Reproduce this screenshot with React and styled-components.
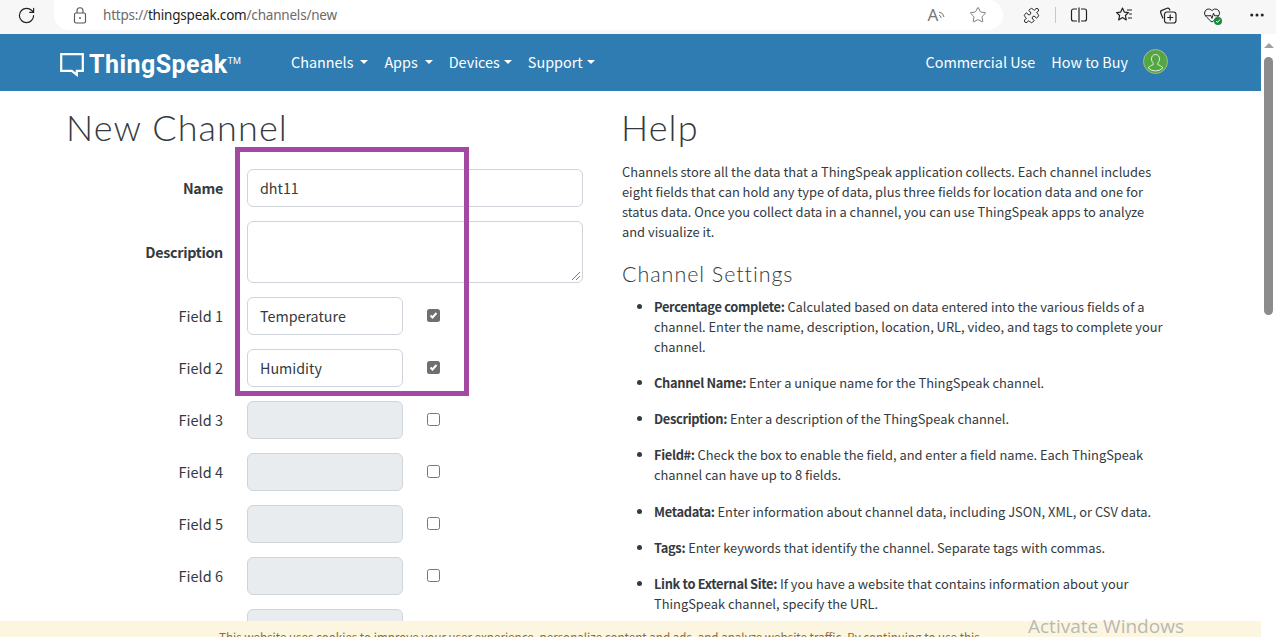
import React from "react";
import styled, { createGlobalStyle } from "styled-components";
import { RotateCw, Star, Puzzle, HeartPulse, MoreHorizontal } from "lucide-react";

const bodyFont = `"Noto Sans CJK SC", "Noto Sans", sans-serif`;
const headFont = `Lato, "Open Sans", sans-serif`;

const Global = createGlobalStyle`
  html, body { margin: 0; padding: 0; background: #fff; overflow: hidden; }
  * { box-sizing: border-box; }
`;

const Screen = styled.div`
  position: relative;
  width: 1276px;
  height: 637px;
  overflow: hidden;
  display: flex;
  flex-direction: column;
  font-family: ${bodyFont};
  color: #343a40;
`;

/* browser toolbar */
const Toolbar = styled.div`
  height: 34px;
  flex: none;
  background: #f7f7f7;
  display: flex;
  align-items: center;
  padding: 0 0 4px 16px;
`;
const IconSlot = styled.div`
  width: ${(p) => p.$w || 20}px;
  height: 20px;
  margin-right: ${(p) => p.$mr || 0}px;
  flex: none;
  display: flex;
  align-items: center;
  justify-content: center;
  position: relative;
  color: ${(p) => p.$color || "#222"};
`;
const AddressPill = styled.div`
  width: 949px;
  height: 30px;
  margin: 0 18px 0 18px;
  align-self: flex-start;
  background: #fff;
  border-radius: 0 15px 15px 15px;
  display: flex;
  align-items: center;
  padding-left: 18px;
`;
const Url = styled.div`
  margin-left: 15px;
  font-size: 13.5px;
  font-family: "Noto Sans", sans-serif;
  letter-spacing: -0.2px;
  color: #6b6b6b;
  flex: 1;
  b { font-weight: 400; color: #1d1d1d; }
`;
const ReadAloud = styled.span`
  font-size: 17px;
  color: #777;
  font-family: "Noto Sans", sans-serif;
  line-height: 20px;
`;
const Divider = styled.div`
  width: 1px;
  height: 16px;
  background: #c8c8c8;
  margin-right: 13px;
  flex: none;
`;
const Badge = styled.span`
  position: absolute;
  right: 0;
  bottom: 0;
  width: 8px;
  height: 8px;
  border-radius: 50%;
  background: #1a8a3a;
  display: flex;
  align-items: center;
  justify-content: center;
`;

/* page + scrollbar */
const Viewport = styled.div`
  flex: 1;
  min-height: 0;
  display: flex;
  background: #f7f7f7;
`;
const Page = styled.div`
  flex: 1;
  min-width: 0;
  display: flex;
  flex-direction: column;
  background: #fff;
`;
const Scrollbar = styled.div`
  width: 15px;
  flex: none;
  background: #fff;
  border-radius: 6px 0 0 0;
  display: flex;
  flex-direction: column;
  align-items: center;
  padding-top: 9px;
`;
const ScrollArrow = styled.div`
  width: 0;
  height: 0;
  border-left: 5px solid transparent;
  border-right: 5px solid transparent;
  border-bottom: 5px solid #a0a0a0;
`;
const ScrollThumb = styled.div`
  width: 9px;
  height: 258px;
  margin-top: 9px;
  background: #8c8c8c;
  border-radius: 4.5px;
`;

/* site nav */
const Nav = styled.nav`
  height: 57px;
  flex: none;
  background: #2e7cb1;
  display: flex;
  align-items: center;
  padding: 0 0 2px 60px;
  color: #fff;
`;
const Logo = styled.div`
  display: flex;
  align-items: center;
  width: 231px;
  margin-top: 6px;
  flex: none;
`;
const LogoText = styled.span`
  margin-left: 5px;
  font-family: Roboto, "Liberation Sans", sans-serif;
  font-weight: 700;
  font-size: 25px;
  letter-spacing: 0.45px;
  line-height: 30px;
  sup { font-size: 9px; font-weight: 400; vertical-align: 9px; line-height: 0; letter-spacing: 0; }
`;
const NavItem = styled.a`
  font-size: 14.4px;
  line-height: 20px;
  color: #fff;
  margin-right: ${(p) => p.$mr || 16}px;
  display: inline-flex;
  align-items: center;
  &::after {
    content: ${(p) => (p.$caret ? '""' : "none")};
    margin-left: ${(p) => p.$caret}px;
    border-top: 4px solid #fff;
    border-left: 4px solid transparent;
    border-right: 4px solid transparent;
  }
`;
const NavSpacer = styled.div`
  flex: 1;
`;
const Avatar = styled.div`
  width: 25px;
  height: 25px;
  margin-right: 93px;
  flex: none;
`;

/* content */
const Content = styled.main`
  display: grid;
  grid-template-columns: 555px 544px;
  padding-left: 67px;
  align-items: start;
`;
const H1 = styled.h1`
  margin: 15px 0 0 -1px;
  font-family: ${headFont};
  font-weight: 300;
  font-size: 36px;
  line-height: 43px;
  color: #343a40;
  letter-spacing: 1.1px;
`;
const Form = styled.div`
  margin-top: 20px;
  display: flex;
  flex-direction: column;
  gap: 14px;
`;
const Row = styled.div`
  display: flex;
  align-items: center;
`;
const Label = styled.label`
  width: 156px;
  margin-right: 24px;
  padding-bottom: 2px;
  text-align: right;
  font-size: ${(p) => (p.$bold ? "14.3px" : "14.5px")};
  font-weight: ${(p) => (p.$bold ? 700 : 400)};
  letter-spacing: ${(p) => (p.$bold ? "-0.3px" : "0")};
  flex: none;
`;
const Input = styled.div`
  width: ${(p) => p.$w || 156}px;
  height: ${(p) => p.$h || 38}px;
  flex: none;
  border: 1px solid #ced4da;
  border-radius: 6px;
  background: ${(p) => (p.$off ? "#e9ecef" : "#fff")};
  padding: 0 12px;
  font-size: 14.3px;
  line-height: 36px;
  color: #343a40;
  position: relative;
`;
const Grip = styled.svg`
  position: absolute;
  right: 1px;
  bottom: 1px;
`;
const Check = styled.div`
  width: 13px;
  height: 13px;
  margin-left: 24px;
  margin-top: -2px;
  flex: none;
  border-radius: 2.5px;
  border: ${(p) => (p.$on ? "none" : "1px solid #767676")};
  background: ${(p) => (p.$on ? "#6f6f6f" : "#fff")};
  display: flex;
  align-items: center;
  justify-content: center;
`;
const Highlight = styled.div`
  position: absolute;
  left: 235px;
  top: 147px;
  width: 234px;
  height: 249px;
  border: 5px solid #a349a4;
  pointer-events: none;
`;

const HelpCol = styled.section`
  font-size: 12.87px;
  line-height: 20px;
`;
const P = styled.p`
  margin: 13px 0 0;
`;
const H2 = styled.h2`
  margin: 19px 0 0;
  font-family: ${headFont};
  font-weight: 300;
  font-size: 21.5px;
  line-height: 26px;
  letter-spacing: 0.95px;
  color: #343a40;
`;
const Bullets = styled.ul`
  margin: 10px 0 0;
  padding-left: 32px;
`;
const Bullet = styled.li`
  margin-bottom: 16.15px;
  strong { letter-spacing: -0.33px; }
`;

/* overlays */
const Cookie = styled.div`
  position: absolute;
  left: 0;
  bottom: 0;
  width: 1261px;
  height: 16px;
  background: #fcf6e1;
  padding: 8px 0 0 219px;
  font-size: 11.63px;
  line-height: 16px;
  color: #8a6d3b;
  white-space: nowrap;
  overflow: hidden;
`;
const Activate = styled.div`
  position: absolute;
  left: 1028px;
  top: 614px;
  font-family: "Open Sans", sans-serif;
  font-size: 19px;
  line-height: 24px;
  color: #b9b9b2;
`;

const FIELDS = [
  { n: 1, value: "Temperature", on: true },
  { n: 2, value: "Humidity", on: true },
  { n: 3 },
  { n: 4 },
  { n: 5 },
  { n: 6 },
];

const HELP = [
  ["Percentage complete:", " Calculated based on data entered into the various fields of a channel. Enter the name, description, location, URL, video, and tags to complete your channel."],
  ["Channel Name:", " Enter a unique name for the ThingSpeak channel."],
  ["Description:", " Enter a description of the ThingSpeak channel."],
  ["Field#:", " Check the box to enable the field, and enter a field name. Each ThingSpeak channel can have up to 8 fields."],
  ["Metadata:", " Enter information about channel data, including JSON, XML, or CSV data."],
  ["Tags:", " Enter keywords that identify the channel. Separate tags with commas."],
  ["Link to External Site:", " If you have a website that contains information about your ThingSpeak channel, specify the URL."],
];

const LockIcon = () => (
  <svg width="14" height="17" viewBox="0 0 14 17" fill="none" stroke="#555" strokeWidth="1.1">
    <rect x="1.5" y="6" width="11" height="10" rx="1.5" />
    <path d="M4 6V3.8a3 3 0 0 1 6 0V6" />
    <circle cx="7" cy="11" r="0.9" fill="#555" stroke="none" />
  </svg>
);
const SplitIcon = () => (
  <svg width="20" height="20" viewBox="0 0 20 20" fill="none" stroke="#222" strokeWidth="1.2">
    <path d="M8 4H4.5A2 2 0 0 0 2.5 6v8a2 2 0 0 0 2 2H8M10 2.5v15M12 4h3.5a2 2 0 0 1 2 2v8a2 2 0 0 1-2 2H12" />
  </svg>
);
const FavIcon = () => (
  <svg width="20" height="20" viewBox="0 0 20 20" fill="none" stroke="#222" strokeWidth="1.2" strokeLinejoin="round">
    <path d="M8.5 3l1.9 4.2 4 .4-3 2.9.9 4.4-3.8-2.3-3.8 2.3.9-4.4-3-2.9 4-.4zM13 5h5M15 9h3M14 13h4" />
  </svg>
);
const CollectionIcon = () => (
  <svg width="20" height="20" viewBox="0 0 20 20" fill="none" stroke="#222" strokeWidth="1.2">
    <path d="M5 13.5L2.8 8a2 2 0 0 1 1.1-2.6L9 3.2a2 2 0 0 1 2.4.8L12 5.5" />
    <rect x="6.5" y="7" width="11.5" height="11" rx="2.5" />
    <path d="M12.2 9.5v6M9.2 12.5h6" />
  </svg>
);
const ReadWaves = () => (
  <svg width="8" height="10" viewBox="0 0 8 10" fill="none" stroke="#777" strokeWidth="1">
    <path d="M1 5a3 3 0 0 1 2 3M1 2a6 6 0 0 1 5 5" />
  </svg>
);
const BubbleLogo = () => (
  <svg width="24" height="25" viewBox="0 0 24 25" fill="none" stroke="#fff" strokeWidth="2.2">
    <path d="M1.2 2.2h21.6v16.6h-6v4l-5-4H1.2z" />
  </svg>
);
const AvatarIcon = () => (
  <svg width="25" height="25" viewBox="0 0 25 25">
    <circle cx="12.5" cy="12.5" r="12" fill="#52a743" stroke="#a9b88f" strokeWidth="1" />
    <path
      d="M12.5 5.5c2.6 0 4 2 4 4.4 0 1.8-.8 3.3-1.7 4.2v1.5c1.6.8 4.2 1.4 5 3.4a10.5 10.5 0 0 1-14.6 0c.8-2 3.4-2.6 5-3.4v-1.5c-.9-.9-1.7-2.4-1.7-4.2 0-2.4 1.4-4.4 4-4.4z"
      fill="none"
      stroke="#e4eedf"
      strokeWidth="1"
    />
  </svg>
);

export default function App() {
  return (
    <Screen>
      <Global />
      <Toolbar>
        <IconSlot><RotateCw size={19} strokeWidth={1.5} /></IconSlot>
        <AddressPill>
          <IconSlot $w={16}><LockIcon /></IconSlot>
          <Url>https://<b>thingspeak.com</b>/channels/new</Url>
          <IconSlot $w={24} $mr={19}><ReadAloud>A</ReadAloud><ReadWaves /></IconSlot>
          <IconSlot $mr={15} $color="#777"><Star size={18} strokeWidth={1.3} /></IconSlot>
        </AddressPill>
        <IconSlot $mr={14}><Puzzle size={17} strokeWidth={1.4} /></IconSlot>
        <Divider />
        <IconSlot $mr={25}><SplitIcon /></IconSlot>
        <IconSlot $mr={24}><FavIcon /></IconSlot>
        <IconSlot $mr={24}><CollectionIcon /></IconSlot>
        <IconSlot $mr={25}>
          <HeartPulse size={18} strokeWidth={1.3} />
          <Badge>
            <svg width="6" height="6" viewBox="0 0 6 6" fill="none" stroke="#fff" strokeWidth="1">
              <path d="M1 3l1.4 1.4L5 1.6" />
            </svg>
          </Badge>
        </IconSlot>
        <IconSlot><MoreHorizontal size={18} strokeWidth={2} /></IconSlot>
      </Toolbar>
      <Viewport>
        <Page>
          <Nav>
            <Logo>
              <BubbleLogo />
              <LogoText>ThingSpeak<sup>TM</sup></LogoText>
            </Logo>
            <NavItem $caret={7}>Channels</NavItem>
            <NavItem $caret={7}>Apps</NavItem>
            <NavItem $caret={4}>Devices</NavItem>
            <NavItem $caret={4}>Support</NavItem>
            <NavSpacer />
            <NavItem>Commercial Use</NavItem>
            <NavItem $mr={15}>How to Buy</NavItem>
            <Avatar><AvatarIcon /></Avatar>
          </Nav>
          <Content>
            <div>
              <H1>New Channel</H1>
              <Form>
                <Row>
                  <Label $bold>Name</Label>
                  <Input $w={336}>dht11</Input>
                </Row>
                <Row>
                  <Label $bold>Description</Label>
                  <Input $w={336} $h={62}>
                    <Grip width="11" height="11" viewBox="0 0 11 11" stroke="#777" strokeWidth="1">
                      <path d="M2 10L10 2M6 10l4-4" />
                    </Grip>
                  </Input>
                </Row>
                {FIELDS.map((f) => (
                  <Row key={f.n}>
                    <Label>Field {f.n}</Label>
                    <Input $off={!f.on}>{f.value}</Input>
                    <Check $on={f.on}>
                      {f.on && (
                        <svg width="11" height="11" viewBox="0 0 11 11" fill="none" stroke="#fff" strokeWidth="2">
                          <path d="M2.5 5.5l2 2 4-4.5" />
                        </svg>
                      )}
                    </Check>
                  </Row>
                ))}
                <Row>
                  <Label />
                  <Input $off />
                </Row>
              </Form>
            </div>
            <HelpCol>
              <H1>Help</H1>
              <P>
                Channels store all the data that a ThingSpeak application collects. Each channel includes eight fields
                that can hold any type of data, plus three fields for location data and one for status data. Once you
                collect data in a channel, you can use ThingSpeak apps to analyze and visualize it.
              </P>
              <H2>Channel Settings</H2>
              <Bullets>
                {HELP.map(([term, text]) => (
                  <Bullet key={term}><strong>{term}</strong>{text}</Bullet>
                ))}
              </Bullets>
            </HelpCol>
          </Content>
        </Page>
        <Scrollbar>
          <ScrollArrow />
          <ScrollThumb />
        </Scrollbar>
      </Viewport>
      <Highlight />
      <Cookie>
        This website uses cookies to improve your user experience, personalize content and ads, and analyze website traffic. By continuing to use this
      </Cookie>
      <Activate>Activate Windows</Activate>
    </Screen>
  );
}
